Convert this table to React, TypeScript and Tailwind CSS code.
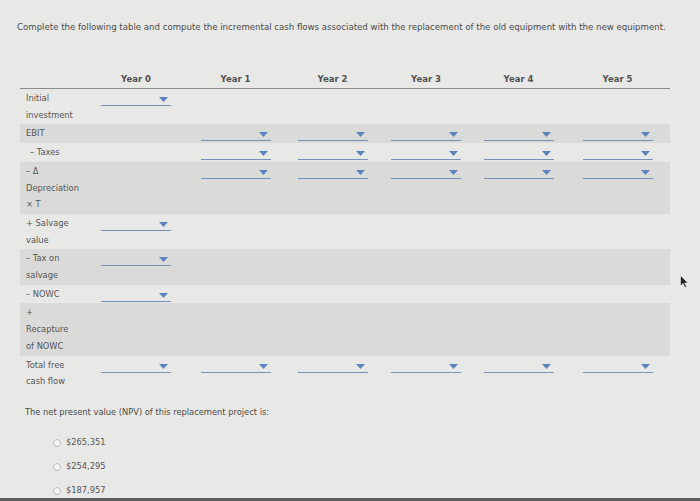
import React from "react";

type Cell = null | true;
type Row = { label: string[]; indent?: boolean; band?: boolean; cells: Cell[] };

const years = ["Year 0", "Year 1", "Year 2", "Year 3", "Year 4", "Year 5"];

const rows: Row[] = [
  { label: ["Initial", "investment"], cells: [true, null, null, null, null, null] },
  { label: ["EBIT"], band: true, cells: [null, true, true, true, true, true] },
  { label: ["– Taxes"], indent: true, cells: [null, true, true, true, true, true] },
  { label: ["– Δ", "Depreciation", "× T"], band: true, cells: [null, true, true, true, true, true] },
  { label: ["+ Salvage", "value"], cells: [true, null, null, null, null, null] },
  { label: ["– Tax on", "salvage"], band: true, cells: [true, null, null, null, null, null] },
  { label: ["– NOWC"], cells: [true, null, null, null, null, null] },
  { label: ["+", "Recapture", "of NOWC"], band: true, cells: [null, null, null, null, null, null] },
  { label: ["Total free", "cash flow"], cells: [true, true, true, true, true, true] },
];

const grid = "grid grid-cols-[66px_100px_99px_95px_92px_93px_105px]";

function Dropdown() {
  return (
    <div className="relative mt-[1px] h-[15px] w-[70px] border-b-[1.5px] border-[#7393bb]">
      <svg className="absolute right-[3px] top-[6px]" width="9" height="5" viewBox="0 0 9 5">
        <path d="M0 0 H9 L4.5 5 Z" fill="#5a84bd" />
      </svg>
    </div>
  );
}

export default function App() {
  return (
    <div className="relative h-[501px] w-[700px] overflow-hidden bg-[#e8e9e7] font-['DejaVu_Sans',sans-serif] text-[#555]">
      <p className="pl-[17px] pt-[21px] text-[8.6px] leading-[12px] text-[#4a4a4a]">
        Complete the following table and compute the incremental cash flows associated with the replacement of the old equipment with the new equipment.
      </p>

      <div className="ml-[20px] mt-[37px] w-[650px]">
        <div className={`${grid} h-[19px] items-center border-b border-[#8c8c8c] text-[8.5px] font-bold text-[#505050]`}>
          <div />
          {years.map((y) => (
            <div key={y} className="text-center">
              {y}
            </div>
          ))}
        </div>

        {rows.map((r, i) => (
          <div
            key={i}
            className={`${grid} py-[1px] text-[8.3px] leading-[16.7px] ${r.band ? "bg-[#dadbd9]" : ""}`}
          >
            <div className={r.indent ? "pl-[10px]" : "pl-[6px]"}>
              {r.label.map((l, j) => (
                <div key={j}>{l}</div>
              ))}
            </div>
            {r.cells.map((c, j) => (
              <div key={j} className="flex justify-center">
                {c && <Dropdown />}
              </div>
            ))}
          </div>
        ))}
      </div>

      <p className="pl-[25px] pt-[15px] text-[8.3px] text-[#4a4a4a]">
        The net present value (NPV) of this replacement project is:
      </p>
      <div className="mt-[18px] flex flex-col gap-[11px] pl-[53px] text-[8.3px] leading-[13px]">
        {["$265,351", "$254,295", "$187,957"].map((v) => (
          <label key={v} className="flex items-center gap-[5px]">
            <span className="h-[8px] w-[8px] rounded-full border border-[#bdbdbd] bg-[#f4f4f4]" />
            <span>{v}</span>
          </label>
        ))}
      </div>

      <svg className="absolute left-[680px] top-[275px]" width="9" height="13" viewBox="0 0 9 13">
        <path d="M0.5 0.5 V11 L3 8.5 L5 12.5 L6.5 11.8 L4.6 8 H8 Z" fill="#222" stroke="#eee" strokeWidth="0.6" />
      </svg>

      <div className="absolute bottom-0 left-0 h-[3px] w-full bg-[#5c5c5c]" />
    </div>
  );
}
